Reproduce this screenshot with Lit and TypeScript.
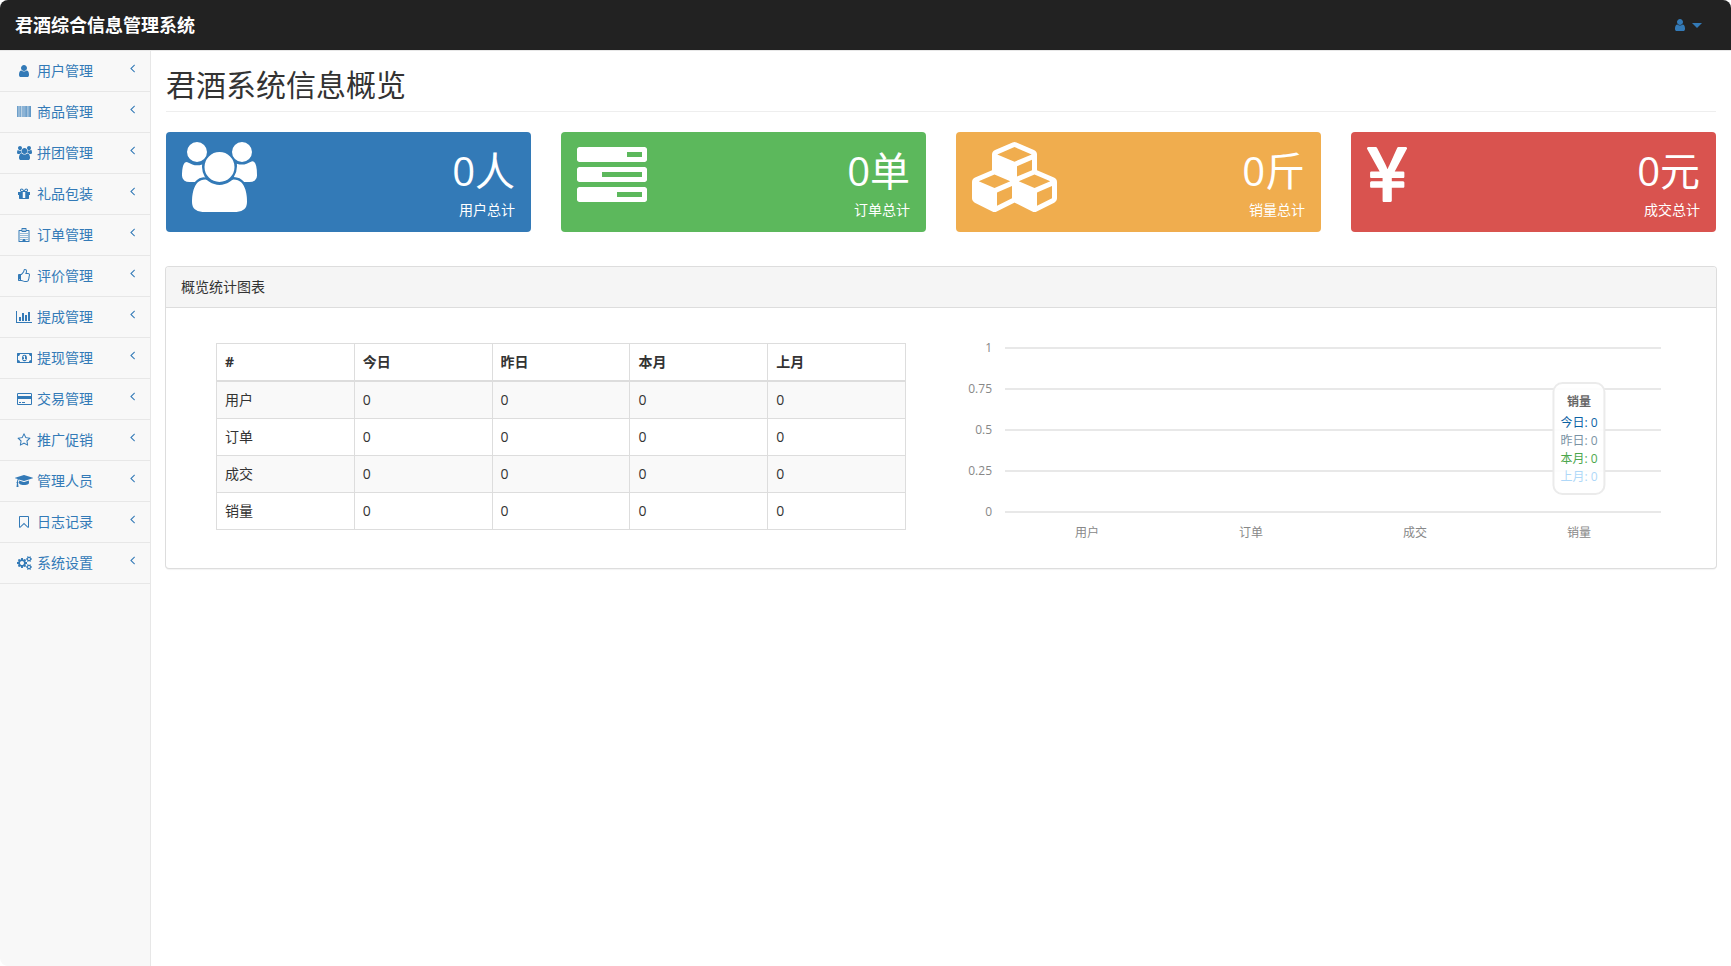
import { LitElement, html, css, svg } from "lit";
import { customElement, property, state } from "lit/decorators.js";

interface Glyph {
  box: string;
  path: string;
}

const SQUARE = "0 0 1792 1792";

const stripe = (x: number, w: number) => `M${x} 128h${w}v1408h-${w}z`;
const pane = (x: number, y: number) => `M${x} ${y}h128v128h-128z`;

const SMALL_COG =
  "v140q0 16-149 31-12 27-30 52 51 113 51 138 0 4-4 7-122 71-124 71-8 0-46-47t-52-68q-20 2-30 2t-30-2q-14 21-52 68t-46 47q-2 0-124-71-4-3-4-7 0-25 51-138-18-25-30-52-149-15-149-31v-140q0-16 149-31 13-29 30-52-51-113-51-138 0-4 4-7 4-2 35-20t59-34 30-16q8 0 46 46.5t52 67.5q20-2 30-2t30 2q51-71 92-112l6-2q4 0 124 70 4 3 4 7 0 25-51 138 17 23 30 52 149 15 149 31z";

const GLYPHS: Record<string, Glyph> = {
  user: {
    box: SQUARE,
    path: "M1536 1399q0 109-62.5 187t-150.5 78h-854q-88 0-150.5-78t-62.5-187q0-85 8.5-160.5t31.5-152 58.5-131 94-89 134.5-34.5q131 128 313 128t313-128q76 0 134.5 34.5t94 89 58.5 131 31.5 152 8.5 160.5zm-256-887q0 159-112.5 271.5t-271.5 112.5-271.5-112.5-112.5-271.5 112.5-271.5 271.5-112.5 271.5 112.5 112.5 271.5z",
  },
  barcode: {
    box: SQUARE,
    path: [
      [0, 90], [140, 60], [250, 70], [400, 80], [600, 110], [780, 70], [920, 70], [1050, 80],
      [1190, 110], [1370, 90], [1520, 60], [1620, 60], [1710, 82],
    ].map(([x, w]) => stripe(x, w)).join(""),
  },
  users: {
    box: "64 0 1920 1792",
    path: "M657 896q-162 5-265 128h-134q-82 0-138-40.5t-56-118.5q0-353 124-353 6 0 43.5 21t97.5 42.5 119 21.5q67 0 133-23-5 37-5 66 0 143 81 276zm1071 637q0 120-73 189.5t-194 69.5h-874q-121 0-194-69.5t-73-189.5q0-53 3.5-103.5t14-109 26.5-108.5 43-97.5 62-81 85.5-53.5 111.5-20q10 0 43 21.5t73 48 107 48 135 21.5 135-21.5 107-48 73-48 43-21.5q61 0 111.5 20t85.5 53.5 62 81 43 97.5 26.5 108.5 14 109 3.5 103.5zm-1024-1277q0 106-75 181t-181 75-181-75-75-181 75-181 181-75 181 75 75 181zm704 384q0 159-112.5 271.5t-271.5 112.5-271.5-112.5-112.5-271.5 112.5-271.5 271.5-112.5 271.5 112.5 112.5 271.5zm576 225q0 78-56 118.5t-138 40.5h-134q-103-123-265-128 81-133 81-276 0-29-5-66 66 23 133 23 59 0 119-21.5t97.5-42.5 43.5-21q124 0 124 353zm-128-609q0 106-75 181t-181 75-181-75-75-181 75-181 181-75 181 75 75 181z",
  },
  gift: {
    box: SQUARE,
    path: "M1056 1356v-716h-320v716q0 25 18 38.5t46 13.5h192q28 0 46-13.5t18-38.5zm-456-844h195l-126-161q-26-31-69-31-40 0-68 28t-28 68 28 68 68 28zm688-96q0-40-28-68t-68-28q-43 0-69 31l-125 161h194q40 0 68-28t28-68zm376 256v320q0 14-9 23t-23 9h-96v416q0 40-28 68t-68 28h-1088q-40 0-68-28t-28-68v-416h-96q-14 0-23-9t-9-23v-320q0-14 9-23t23-9h440q-93 0-158.5-65.5t-65.5-158.5 65.5-158.5 158.5-65.5q107 0 168 77l128 165 128-165q61-77 168-77 93 0 158.5 65.5t65.5 158.5-65.5 158.5-158.5 65.5h440q14 0 23 9t9 23z",
  },
  hospital: {
    box: SQUARE,
    path:
      "M256 256h320v-192q0-64 64-64h512q64 0 64 64v192h320q64 0 64 64v1408q0 64-64 64h-1280q-64 0-64-64v-1408q0-64 64-64zM320 384v1280h384v-256h384v256h384v-1280h-256q0 128-64 128h-512q-64 0-64-128zM704 128v256h128v-96h128v96h128v-256h-128v64h-128v-64z" +
      [640, 896, 1152].flatMap((y) => [448, 704, 960, 1216].map((x) => pane(x, y))).join("") +
      pane(448, 1408) + pane(1216, 1408),
  },
  thumb: {
    box: SQUARE,
    path: "M384 1344q0-26-19-45t-45-19-45 19-19 45 19 45 45 19 45-19 19-45zm1152-576q0-51-39-89.5t-89-38.5h-352q0-58 48-159.5t48-160.5q0-98-32-145t-128-47q-26 26-38 85t-30.5 125.5-59.5 109.5q-22 23-77 91-4 5-23 30t-31.5 41-34.5 42.5-40 44-38.5 35.5-40 27-35.5 9h-32v640h32q13 0 31.5 3t33 6.5 38 11 35 11.5 35.5 12.5 29 10.5q211 73 342 73h121q192 0 192-167 0-26-5-56 30-16 47.5-52.5t17.5-73.5-18-69q53-50 53-119 0-25-10-55.5t-25-47.5q32-1 53.5-47t21.5-81zm128-1q0 89-49 163 9 33 9 69 0 77-38 144 3 21 3 43 0 101-60 178 1 139-85 219.5t-227 80.5h-129q-96 0-189.5-22.5t-216.5-65.5q-116-40-138-40h-288q-53 0-90.5-37.5t-37.5-90.5v-640q0-53 37.5-90.5t90.5-37.5h274q36-24 137-155 58-75 107-128 24-25 35.5-85.5t30.5-126.5 62-108q39-37 90-37 84 0 151 32.5t102 101.5 35 186q0 93-48 192h176q104 0 180 76t76 179z",
  },
  chart: {
    box: "0 0 2048 1792",
    path: "M640 896v512h-256v-512h256zm384-512v1024h-256v-1024h256zm1024 1152v128h-2048v-1536h128v1408h1920zm-640-896v768h-256v-768h256zm384-384v1152h-256v-1152h256z",
  },
  money: {
    box: "0 0 1920 1792",
    path: "M768 1152h384v-96h-128v-448h-114l-148 137 77 80q42-37 55-57h2v288h-128v96zm512-256q0 70-21 142t-59.5 134-101.5 101-138 39-138-39-101.5-101-59.5-134-21-142 21-142 59.5-134 101.5-101 138-39 138 39 101.5 101 59.5 134 21 142zm512 256v-512q-106 0-181-75t-75-181h-1152q0 106-75 181t-181 75v512q106 0 181 75t75 181h1152q0-106 75-181t181-75zm128-832v1152q0 26-19 45t-45 19h-1792q-26 0-45-19t-19-45v-1152q0-26 19-45t45-19h1792q26 0 45 19t19 45z",
  },
  card: {
    box: "0 0 1920 1792",
    path: "M1760 128q66 0 113 47t47 113v1216q0 66-47 113t-113 47h-1600q-66 0-113-47t-47-113v-1216q0-66 47-113t113-47h1600zm-1600 128q-13 0-22.5 9.5t-9.5 22.5v224h1664v-224q0-13-9.5-22.5t-22.5-9.5h-1600zm1600 1280q13 0 22.5-9.5t9.5-22.5v-608h-1664v608q0 13 9.5 22.5t22.5 9.5h1600zm-1504-128v-128h256v128h-256zm384 0v-128h384v128h-384z",
  },
  star: {
    box: SQUARE,
    path: "M1201 1004l306-297-422-62-189-382-189 382-422 62 306 297-73 421 378-199 377 199zm527-357q0 22-26 48l-363 354 86 500q1 7 1 20 0 50-41 50-19 0-40-12l-449-236-449 236q-22 12-40 12-21 0-31.5-14.5t-10.5-35.5q0-6 2-20l86-500-364-354q-25-27-25-48 0-37 56-46l502-73 225-455q19-41 49-41t49 41l225 455 502 73q56 9 56 46z",
  },
  cap: {
    box: "0 0 2304 1792",
    path: "M1774 836l18 316q4 69-82 128t-235 93.5-323 34.5-323-34.5-235-93.5-82-128l18-316 574 181q22 7 48 7t48-7zm530-324q0 23-22 31l-1120 352q-4 1-10 1t-10-1l-652-206q-43 34-71 111.5t-34 178.5q63 36 63 109 0 69-58 107l58 433q2 14-8 25-9 11-24 11h-192q-15 0-24-11-10-11-8-25l58-433q-58-38-58-107 0-73 65-111 11-207 98-330l-333-104q-22-8-22-31t22-31l1120-352q4-1 10-1t10 1l1120 352q22 8 22 31z",
  },
  bookmark: {
    box: SQUARE,
    path: "M1408 256h-1024v1242l423-406 89-85 89 85 423 406v-1242zm12-128q23 0 44 9 33 13 52.5 41t19.5 62v1289q0 34-19.5 62t-52.5 41q-19 8-44 8-48 0-83-32l-441-424-441 424q-36 33-83 33-23 0-44-9-33-13-52.5-41t-19.5-62v-1289q0-34 19.5-62t52.5-41q21-9 44-9h1048z",
  },
  cogs: {
    box: "0 0 1920 1792",
    path:
      "M896 896q0-106-75-181t-181-75-181 75-75 181 75 181 181 75 181-75 75-181zm768 512q0-52-38-90t-90-38-90 38-38 90q0 53 37.5 90.5t90.5 37.5 90.5-37.5 37.5-90.5zm0-1024q0-52-38-90t-90-38-90 38-38 90q0 53 37.5 90.5t90.5 37.5 90.5-37.5 37.5-90.5zm-384 421v185q0 10-7 19.5t-16 10.5l-155 24q-11 35-32 76 34 48 90 115 7 11 7 20 0 12-7 19-23 30-82.5 89.5t-78.5 59.5q-11 0-21-7l-115-90q-37 19-77 31-11 108-23 155-7 24-30 24h-186q-11 0-20-7.5t-10-17.5l-23-153q-34-10-75-31l-118 89q-7 7-20 7-11 0-21-8-144-133-144-160 0-9 7-19 10-14 41-53t47-61q-23-44-35-82l-152-24q-10-1-17-9.5t-7-19.5v-185q0-10 7-19.5t16-10.5l155-24q11-35 32-76-34-48-90-115-7-11-7-20 0-12 7-20 22-30 82-89t79-59q11 0 21 7l115 90q34-18 77-32 11-108 23-154 7-24 30-24h186q11 0 20 7.5t10 17.5l23 153q34 10 75 31l118-89q8-7 20-7 11 0 21 8 144 133 144 160 0 8-7 19-12 16-42 54t-45 60q23 48 34 82l152 23q10 2 17 10.5t7 19.5z" +
      "M1920 1338" + SMALL_COG + "M1920 314" + SMALL_COG,
  },
  tasks: {
    box: SQUARE,
    path: "M1024 1408h640v-128h-640v128zm-384-512h1024v-128h-1024v128zm640-512h384v-128h-384v128zm512 832v256q0 26-19 45t-45 19h-1664q-26 0-45-19t-19-45v-256q0-26 19-45t45-19h1664q26 0 45 19t19 45zm0-512v256q0 26-19 45t-45 19h-1664q-26 0-45-19t-19-45v-256q0-26 19-45t45-19h1664q26 0 45 19t19 45zm0-512v256q0 26-19 45t-45 19h-1664q-26 0-45-19t-19-45v-256q0-26 19-45t45-19h1664q26 0 45 19t19 45z",
  },
  cubes: {
    box: "0 0 2176 1792",
    path: "M640 1632l384-192v-314l-384 164v342zm-64-454l404-173-404-173-404 173zm1088 454l384-192v-314l-384 164v342zm-64-454l404-173-404-173-404 173zm-448-293l384-165v-266l-384 164v267zm-64-379l441-189-441-189-441 189zm1088 518v416q0 36-19 67t-52 47l-448 224q-25 14-57 14t-57-14l-448-224q-4-2-7-4-2 2-7 4l-448 224q-25 14-57 14t-57-14l-448-224q-33-16-52-47t-19-67v-416q0-38 21.5-70t56.5-48l434-186v-400q0-38 21.5-70t56.5-48l448-192q23-10 50-10t50 10l448 192q35 16 56.5 48t21.5 70v400l434 186q36 16 57 48t21 70z",
  },
  yen: {
    box: "382 0 1027 1792",
    path: "M985 1536h-172q-13 0-22.5-9t-9.5-23v-330h-288q-13 0-22.5-9t-9.5-23v-103q0-13 9.5-22.5t22.5-9.5h288v-85h-288q-13 0-22.5-9t-9.5-23v-104q0-13 9.5-22.5t22.5-9.5h214l-321-578q-8-16 0-32 10-16 28-16h194q19 0 29 18l215 425q19 38 56 125 10-24 30.5-68t27.5-61l191-420q8-19 29-19h191q17 0 27 16 9 14 1 31l-313 579h215q13 0 22.5 9.5t9.5 22.5v104q0 14-9.5 23t-22.5 9h-290v85h290q13 0 22.5 9.5t9.5 22.5v103q0 14-9.5 23t-22.5 9h-290v330q0 13-9.5 22.5t-22.5 9.5z",
  },
  angle: {
    box: "576 0 640 1792",
    path: "M1203 544q0 13-10 23l-393 393 393 393q10 10 10 23t-10 23l-50 50q-10 10-23 10t-23-10l-466-466q-10-10-10-23t10-23l466-466q10-10 23-10t23 10l50 50q10 10 10 23z",
  },
};

@customElement("glyph-icon")
class GlyphIcon extends LitElement {
  @property() name = "user";

  static styles = css`
    :host {
      display: inline-flex;
      justify-content: center;
      align-items: center;
      height: 1em;
      line-height: 1;
      flex: none;
    }
    .glyph {
      display: block;
      height: 1em;
      width: auto;
      overflow: visible;
      fill: currentColor;
      flex: none;
    }
  `;

  render() {
    const g = GLYPHS[this.name];
    return html`<svg class="glyph" viewBox=${g.box} aria-hidden="true">
      ${svg`<path fill-rule="evenodd" d=${g.path}></path>`}
    </svg>`;
  }
}

@customElement("stat-card")
class StatCard extends LitElement {
  @property() icon = "";
  @property() value = "";
  @property() label = "";

  static styles = css`
    :host {
      display: flex;
      justify-content: space-between;
      align-items: flex-start;
      padding: 10px 16px 12px;
      border-radius: 4px;
      color: #fff;
    }
    .icon {
      font-size: 70px;
    }
    .figures {
      text-align: right;
    }
    .value {
      font-size: 40px;
      line-height: 58px;
    }
    .label {
      font-size: 14px;
      line-height: 20px;
    }
  `;

  render() {
    return html`
      <glyph-icon class="icon" name=${this.icon}></glyph-icon>
      <div class="figures">
        <div class="value">${this.value}</div>
        <div class="label">${this.label}</div>
      </div>
    `;
  }
}

@customElement("overview-chart")
class OverviewChart extends LitElement {
  static styles = css`
    :host {
      display: block;
      font-size: 12px;
      line-height: 20px;
      color: #888;
    }
    .ticks {
      display: grid;
      gap: 21px;
    }
    .tick {
      display: grid;
      grid-template-columns: 24px 1fr;
      column-gap: 13px;
      align-items: center;
      text-align: right;
    }
    .line {
      height: 2px;
      background: #e8e8e8;
    }
    .categories {
      display: grid;
      grid-template-columns: repeat(4, 1fr);
      margin-top: 1px;
      padding-left: 37px;
      text-align: center;
    }
    .category {
      position: relative;
    }
    .tooltip {
      position: absolute;
      left: 50%;
      bottom: calc(100% + 28px);
      transform: translateX(-50%);
      padding: 6px 6px 7px;
      border: 2px solid rgba(230, 230, 230, 0.8);
      border-radius: 10px;
      background: rgba(255, 255, 255, 0.9);
      line-height: 18px;
      white-space: nowrap;
    }
    .title {
      margin: 3px 0;
      font-weight: 700;
      color: #666;
    }
    .today { color: #0b62a4; }
    .yesterday { color: #7a92a3; }
    .month { color: #4da74d; }
    .last { color: #afd8f8; }
  `;

  render() {
    return html`
      <div class="ticks">
        ${["1", "0.75", "0.5", "0.25", "0"].map(
          (t) => html`<div class="tick"><span>${t}</span><div class="line"></div></div>`
        )}
      </div>
      <div class="categories">
        <div class="category">用户</div>
        <div class="category">订单</div>
        <div class="category">成交</div>
        <div class="category">
          销量
          <div class="tooltip" role="tooltip">
            <div class="title">销量</div>
            <div class="today">今日: 0</div>
            <div class="yesterday">昨日: 0</div>
            <div class="month">本月: 0</div>
            <div class="last">上月: 0</div>
          </div>
        </div>
      </div>
    `;
  }
}

@customElement("app-root")
class AppRoot extends LitElement {
  @state() private menu = [
    ["user", "用户管理"],
    ["barcode", "商品管理"],
    ["users", "拼团管理"],
    ["gift", "礼品包装"],
    ["hospital", "订单管理"],
    ["thumb", "评价管理"],
    ["chart", "提成管理"],
    ["money", "提现管理"],
    ["card", "交易管理"],
    ["star", "推广促销"],
    ["cap", "管理人员"],
    ["bookmark", "日志记录"],
    ["cogs", "系统设置"],
  ];

  static styles = css`
    :host {
      display: flex;
      flex-direction: column;
      min-height: 100vh;
      border-radius: 8px;
      overflow: hidden;
      background: #fff;
      color: #333;
      font-family: "Open Sans", "Noto Sans CJK SC", sans-serif;
      font-size: 14px;
      line-height: 20px;
    }
    * {
      box-sizing: border-box;
    }
    a {
      color: #337ab7;
      text-decoration: none;
    }
    .navbar {
      display: flex;
      justify-content: space-between;
      align-items: center;
      height: 51px;
      padding: 0 29px 0 15px;
      background: #222;
      border-bottom: 1px solid #e7e7e7;
    }
    .brand {
      color: #fff;
      font-size: 18px;
      font-weight: 700;
    }
    .account {
      display: flex;
      align-items: center;
      gap: 3px;
      padding: 0;
      border: 0;
      background: none;
      color: #337ab7;
      font-size: 14px;
    }
    .fixed {
      width: 18px;
    }
    .caret {
      border-top: 5px solid;
      border-left: 5px solid transparent;
      border-right: 5px solid transparent;
    }
    .layout {
      display: grid;
      grid-template-columns: 151px 1fr;
      flex: 1;
    }
    .sidebar {
      background: #f8f8f8;
      border-right: 1px solid #e7e7e7;
    }
    .menu {
      margin: 0;
      padding: 0;
      list-style: none;
    }
    .item {
      display: flex;
      align-items: center;
      gap: 4px;
      padding: 10px 15px;
      border-bottom: 1px solid #e7e7e7;
    }
    .angle {
      margin-left: auto;
      align-self: flex-start;
    }
    .content {
      padding: 0 15px;
      min-width: 0;
    }
    .heading {
      margin: 0 0 20px;
      padding: 17px 0 10px;
      border-bottom: 1px solid #eee;
      font-size: 30px;
      font-weight: 400;
      line-height: 33px;
    }
    .cards {
      display: grid;
      grid-template-columns: repeat(4, 1fr);
      gap: 30px;
      margin-bottom: 35px;
    }
    .primary { background: #337ab7; }
    .green { background: #5cb85c; }
    .yellow { background: #f0ad4e; }
    .red { background: #d9534f; }
    .panel {
      border-radius: 3px;
      box-shadow: 0 0 0 1px #ddd, 0 2px 1px rgba(0, 0, 0, 0.05);
    }
    .panel-title {
      margin: 0;
      padding: 10px 15px;
      border-bottom: 1px solid #ddd;
      border-radius: 3px 3px 0 0;
      background: #f5f5f5;
      font-size: 14px;
      font-weight: 400;
      line-height: 20px;
    }
    .panel-body {
      display: grid;
      grid-template-columns: 690fr 693fr;
      align-items: start;
      gap: 62px;
      padding: 30px 55px 25px 50px;
    }
    .summary {
      width: 100%;
      margin-top: 5px;
      border-collapse: collapse;
      table-layout: fixed;
    }
    .summary th,
    .summary td {
      padding: 8px;
      border: 1px solid #ddd;
      text-align: left;
    }
    .summary th {
      border-bottom-width: 2px;
    }
    .summary tbody tr:nth-child(odd) {
      background: #f9f9f9;
    }
  `;

  render() {
    return html`
      <header class="navbar">
        <a class="brand" href="#">君酒综合信息管理系统</a>
        <button class="account" type="button" aria-label="账户">
          <glyph-icon class="fixed" name="user"></glyph-icon>
          <span class="caret"></span>
        </button>
      </header>
      <div class="layout">
        <nav class="sidebar">
          <ul class="menu">
            ${this.menu.map(
              ([icon, label]) => html`<li>
                <a class="item" href="#">
                  <glyph-icon class="fixed" name=${icon}></glyph-icon>
                  <span>${label}</span>
                  <glyph-icon class="angle" name="angle"></glyph-icon>
                </a>
              </li>`
            )}
          </ul>
        </nav>
        <main class="content">
          <h1 class="heading">君酒系统信息概览</h1>
          <div class="cards">
            <stat-card class="primary" icon="users" value="0人" label="用户总计"></stat-card>
            <stat-card class="green" icon="tasks" value="0单" label="订单总计"></stat-card>
            <stat-card class="yellow" icon="cubes" value="0斤" label="销量总计"></stat-card>
            <stat-card class="red" icon="yen" value="0元" label="成交总计"></stat-card>
          </div>
          <section class="panel">
            <h2 class="panel-title">概览统计图表</h2>
            <div class="panel-body">
              <table class="summary">
                <thead>
                  <tr>
                    ${["#", "今日", "昨日", "本月", "上月"].map((h) => html`<th scope="col">${h}</th>`)}
                  </tr>
                </thead>
                <tbody>
                  ${["用户", "订单", "成交", "销量"].map(
                    (name) => html`<tr>
                      <td>${name}</td>
                      ${[0, 0, 0, 0].map((n) => html`<td>${n}</td>`)}
                    </tr>`
                  )}
                </tbody>
              </table>
              <overview-chart></overview-chart>
            </div>
          </section>
        </main>
      </div>
    `;
  }
}
